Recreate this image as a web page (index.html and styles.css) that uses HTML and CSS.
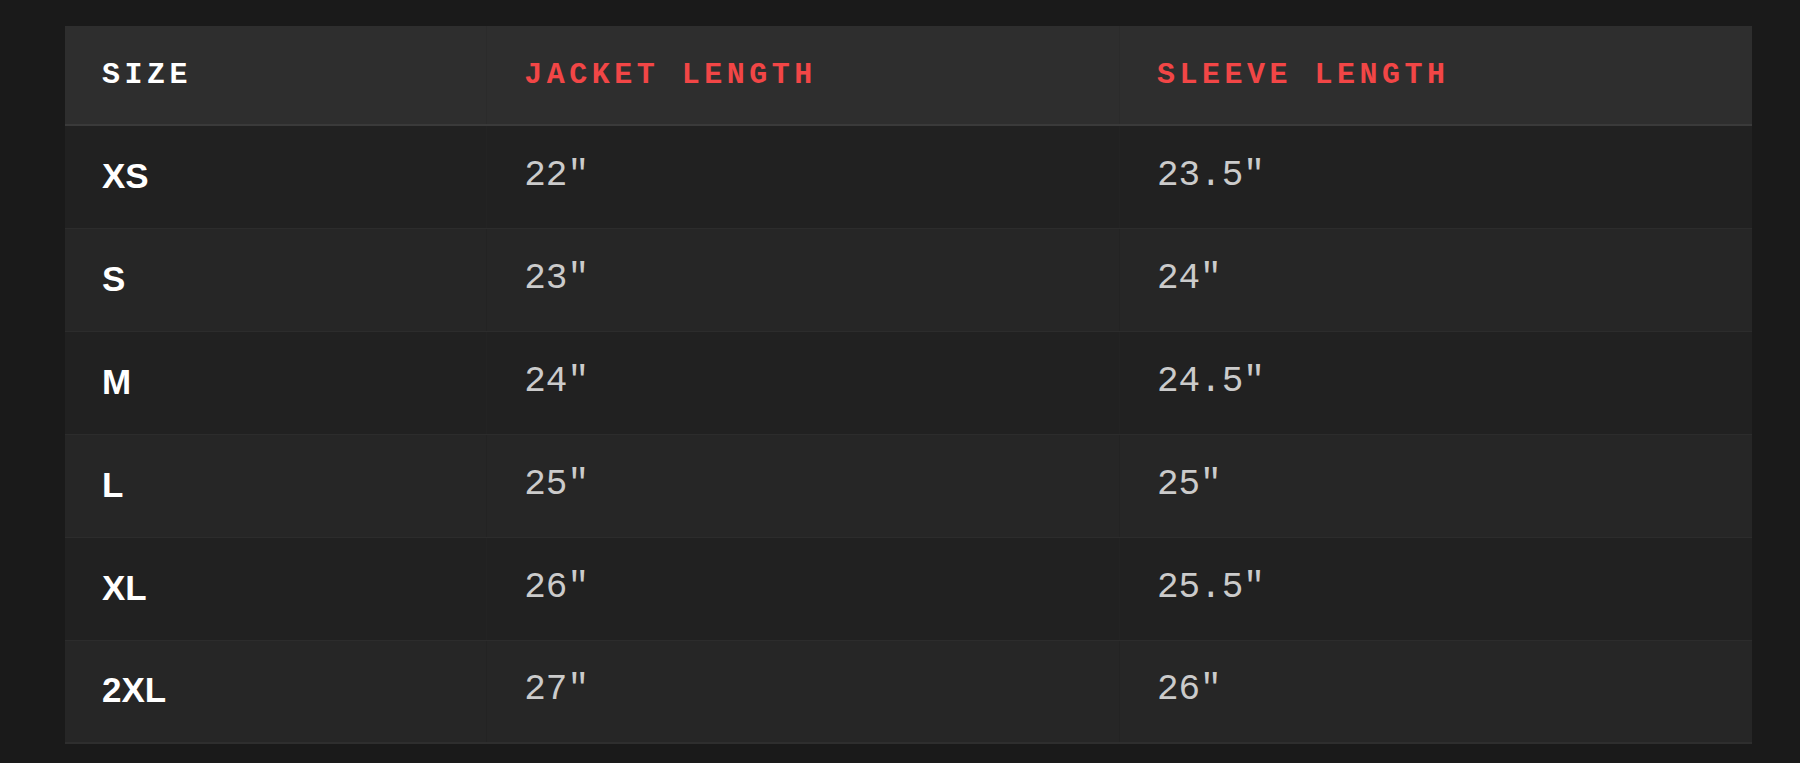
FILE: index.html
```html
<!DOCTYPE html>
<html lang="en">
<head>
<meta charset="utf-8">
<title>Size Chart</title>
<link rel="stylesheet" href="styles.css">
</head>
<body>
<main class="page">
  <table class="size-table">
    <colgroup>
      <col class="col-size">
      <col class="col-len">
      <col class="col-len">
    </colgroup>
    <thead>
      <tr>
        <th class="h-size">SIZE</th>
        <th class="h-accent">JACKET LENGTH</th>
        <th class="h-accent">SLEEVE LENGTH</th>
      </tr>
    </thead>
    <tbody>
      <tr><td class="size">XS</td><td class="val">22"</td><td class="val">23.5"</td></tr>
      <tr><td class="size">S</td><td class="val">23"</td><td class="val">24"</td></tr>
      <tr><td class="size">M</td><td class="val">24"</td><td class="val">24.5"</td></tr>
      <tr><td class="size">L</td><td class="val">25"</td><td class="val">25"</td></tr>
      <tr><td class="size">XL</td><td class="val">26"</td><td class="val">25.5"</td></tr>
      <tr><td class="size">2XL</td><td class="val">27"</td><td class="val">26"</td></tr>
    </tbody>
  </table>
</main>
</body>
</html>
```

FILE: styles.css
```css
html, body {
  margin: 0;
  padding: 0;
  background: #1a1a1a;
}

.page {
  padding: 26px 48px 0 65px;
}

.size-table {
  width: 100%;
  border-collapse: collapse;
  table-layout: fixed;
  font-family: "Liberation Mono", monospace;
}

.col-size { width: 25%; }
.col-len { width: 37.5%; }

.size-table th {
  background: #2e2e2e;
  text-align: left;
  font-size: 30px;
  line-height: 36px;
  font-weight: 700;
  letter-spacing: 0.15em;
  padding: 31px 37px;
  border-bottom: 2px solid #3a3a3a;
  border-right: 1px solid #2b2b2b;
}

.size-table th:last-child,
.size-table td:last-child { border-right: none; }

.h-size { color: #ffffff; }
.h-accent { color: #f24646; }

.size-table td {
  height: 103px;
  box-sizing: border-box;
  padding: 0 37px 2px;
  line-height: 42px;
  vertical-align: middle;
  border-bottom: 1px solid #2c2c2c;
  border-right: 1px solid #232323;
}

.size-table tbody tr:nth-child(odd) td { background: #212121; }
.size-table tbody tr:nth-child(even) td { background: #262626; }

.size-table tbody tr:last-child td { border-bottom: 2px solid #2e2e2e; }

.size {
  font-family: "Liberation Sans", Arial, sans-serif;
  font-weight: 700;
  font-size: 35px;
  color: #ffffff;
}

.val {
  font-size: 36px;
  color: #cbcbcb;
}
```
